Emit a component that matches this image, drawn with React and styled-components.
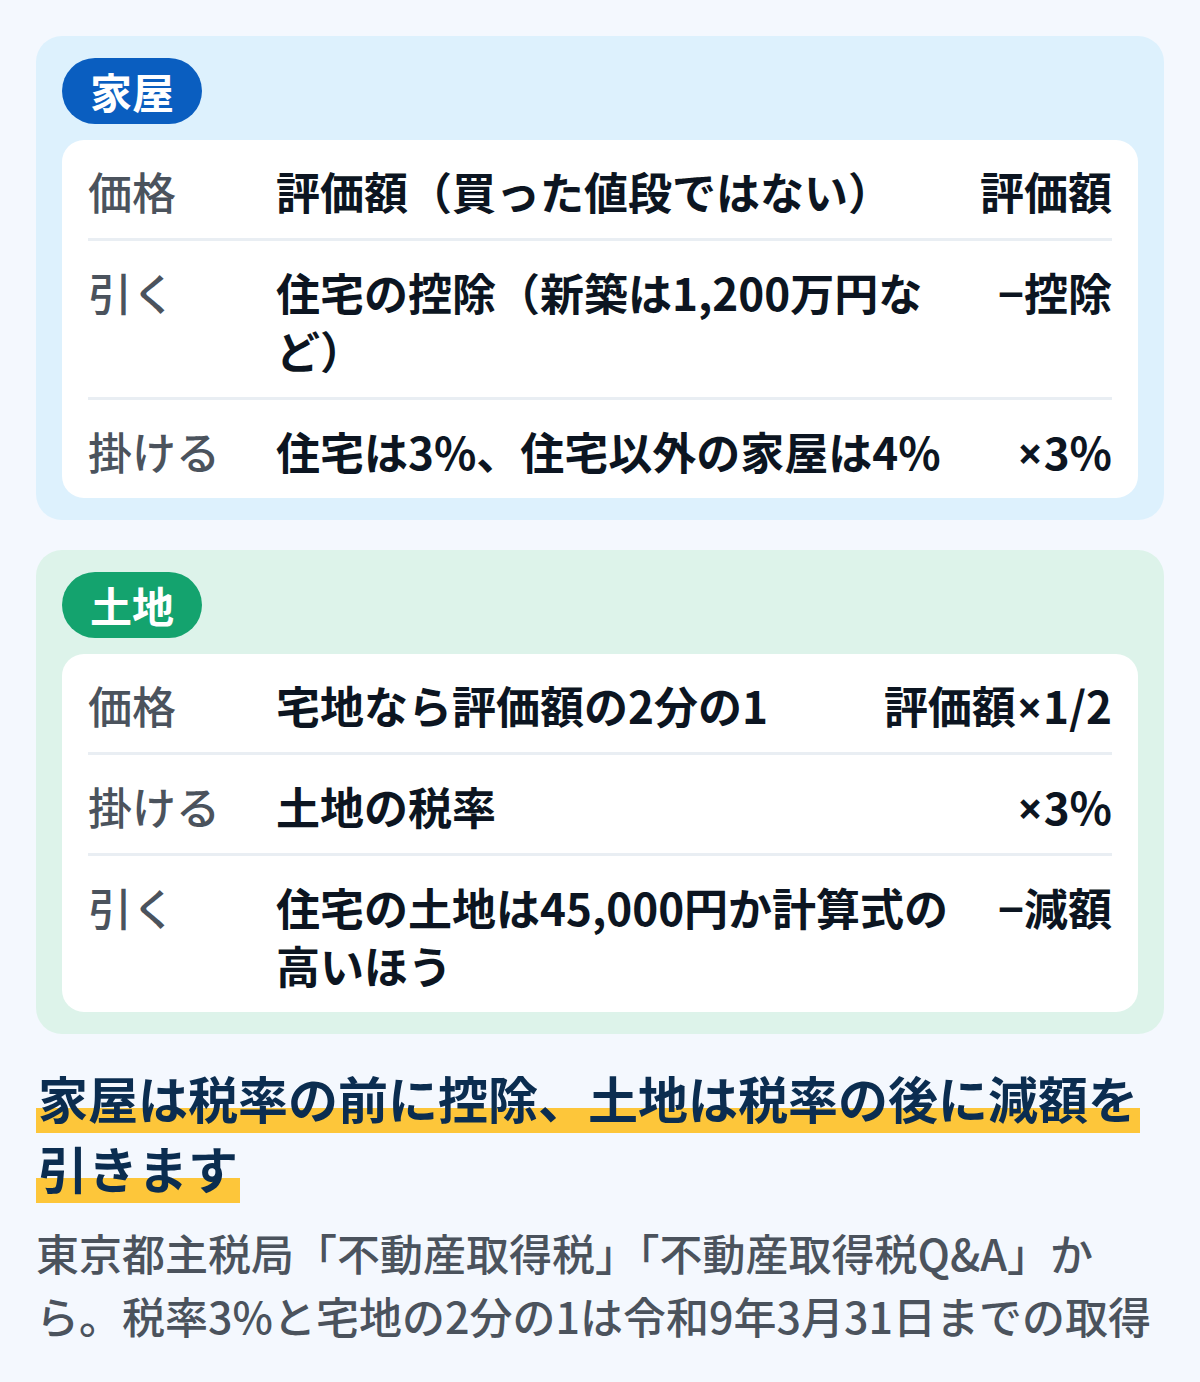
import React from "react";
import styled, { createGlobalStyle } from "styled-components";

const GlobalStyle = createGlobalStyle`
  html, body {
    margin: 0;
    padding: 0;
    background: #f4f8fe;
  }
  body {
    font-family: "Noto Sans CJK JP", "Noto Sans", sans-serif;
    -webkit-font-smoothing: antialiased;
  }
`;

const Page = styled.main`
  display: flex;
  flex-direction: column;
  padding: 36px 36px 35px;
  box-sizing: border-box;
  width: 1200px;
`;

const Section = styled.section`
  display: flex;
  flex-direction: column;
  align-items: flex-start;
  gap: 16px;
  padding: 22px 26px 22px;
  border-radius: 26px;
  background: ${(p) => p.$bg};
  & + & {
    margin-top: 30px;
  }
`;

const Badge = styled.span`
  display: inline-flex;
  align-items: center;
  height: 66px;
  padding: 0 28px;
  border-radius: 33px;
  background: ${(p) => p.$color};
  color: #ffffff;
  font-size: 42px;
  font-weight: 700;
  line-height: 1;
`;

const Table = styled.div`
  align-self: stretch;
  display: flex;
  flex-direction: column;
  background: #ffffff;
  border-radius: 22px;
  padding: 0 26px;
`;

const Row = styled.div`
  display: flex;
  align-items: flex-start;
  gap: 24px;
  padding: 22px 0 18px;
  font-size: 44px;
  line-height: 58px;
  & + & {
    border-top: 3px solid #e9eef3;
  }
`;

const Label = styled.div`
  flex: none;
  width: 164px;
  color: #4b535d;
  font-weight: 500;
  white-space: nowrap;
`;

const Desc = styled.div`
  flex: 1;
  min-width: 0;
  color: #0c1521;
  font-weight: 700;
`;

const Value = styled.div`
  flex: none;
  text-align: right;
  color: #0c1521;
  font-weight: 700;
  white-space: nowrap;
`;

const Times = styled.span`
  font-family: "Noto Sans", "DejaVu Sans", sans-serif;
  font-weight: 700;
  line-height: 1;
  margin: 0 1px;
`;

const Heading = styled.h2`
  margin: 28px 0 0;
  font-size: 50px;
  line-height: 70px;
  font-weight: 700;
  color: #0b2d50;
`;

const Mark = styled.span`
  background: linear-gradient(transparent 65%, #fdc63a 65%);
  padding: 0 2px;
  -webkit-box-decoration-break: clone;
  box-decoration-break: clone;
`;

const Note = styled.p`
  margin: 19px 0 0;
  font-size: 43px;
  line-height: 63px;
  font-weight: 500;
  color: #4b535d;
`;

const sections = [
  {
    title: "家屋",
    badge: "#0a5ec0",
    bg: "#ddf1fd",
    rows: [
      ["価格", "評価額（買った値段ではない）", "評価額"],
      ["引く", "住宅の控除（新築は1,200万円など）", "−控除"],
      ["掛ける", "住宅は3%、住宅以外の家屋は4%", "×3%"],
    ],
  },
  {
    title: "土地",
    badge: "#14a36e",
    bg: "#ddf3ea",
    rows: [
      ["価格", "宅地なら評価額の2分の1", "評価額×1/2"],
      ["掛ける", "土地の税率", "×3%"],
      ["引く", "住宅の土地は45,000円か計算式の高いほう", "−減額"],
    ],
  },
];

function renderValue(value) {
  const parts = value.split("×");
  return parts.map((part, i) => (
    <React.Fragment key={i}>
      {i > 0 && <Times>×</Times>}
      {part}
    </React.Fragment>
  ));
}

export default function App() {
  return (
    <>
      <GlobalStyle />
      <Page>
        {sections.map((s) => (
          <Section key={s.title} $bg={s.bg}>
            <Badge $color={s.badge}>{s.title}</Badge>
            <Table>
              {s.rows.map(([label, desc, value]) => (
                <Row key={label + desc}>
                  <Label>{label}</Label>
                  <Desc>{desc}</Desc>
                  <Value>{renderValue(value)}</Value>
                </Row>
              ))}
            </Table>
          </Section>
        ))}
        <Heading>
          <Mark>家屋は税率の前に控除、土地は税率の後に減額を引きます</Mark>
        </Heading>
        <Note>
          東京都主税局「不動産取得税」「不動産取得税Q&amp;A」から。税率3%と宅地の2分の1は令和9年3月31日までの取得
        </Note>
      </Page>
    </>
  );
}
